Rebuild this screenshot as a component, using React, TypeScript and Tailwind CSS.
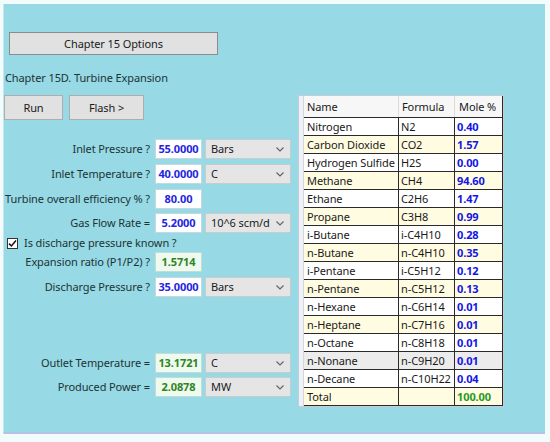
import { ReactNode } from 'react';

type Comp = { name: string; formula: string; mole: string };

const components: Comp[] = [
  { name: 'Nitrogen', formula: 'N2', mole: '0.40' },
  { name: 'Carbon Dioxide', formula: 'CO2', mole: '1.57' },
  { name: 'Hydrogen Sulfide', formula: 'H2S', mole: '0.00' },
  { name: 'Methane', formula: 'CH4', mole: '94.60' },
  { name: 'Ethane', formula: 'C2H6', mole: '1.47' },
  { name: 'Propane', formula: 'C3H8', mole: '0.99' },
  { name: 'i-Butane', formula: 'i-C4H10', mole: '0.28' },
  { name: 'n-Butane', formula: 'n-C4H10', mole: '0.35' },
  { name: 'i-Pentane', formula: 'i-C5H12', mole: '0.12' },
  { name: 'n-Pentane', formula: 'n-C5H12', mole: '0.13' },
  { name: 'n-Hexane', formula: 'n-C6H14', mole: '0.01' },
  { name: 'n-Heptane', formula: 'n-C7H16', mole: '0.01' },
  { name: 'n-Octane', formula: 'n-C8H18', mole: '0.01' },
  { name: 'n-Nonane', formula: 'n-C9H20', mole: '0.01' },
  { name: 'n-Decane', formula: 'n-C10H22', mole: '0.04' },
];

function Chevron() {
  return (
    <svg width="8" height="5" viewBox="0 0 8 5" className="shrink-0">
      <path d="M0.5 0.5 L4 4 L7.5 0.5" fill="none" stroke="#606060" strokeWidth="1.1" />
    </svg>
  );
}

function Select({ value }: { value: string }) {
  return (
    <div className="w-[86px] h-[20px] ml-[3px] flex items-center justify-between pl-[5px] pr-[6px] bg-[#e5e5e5] border border-[#c9cccc] text-[#1a1a1a] whitespace-nowrap">
      <span>{value}</span>
      <Chevron />
    </div>
  );
}

function ValueBox({ value, computed }: { value: string; computed?: boolean }) {
  return (
    <div
      className={
        computed
          ? 'w-[47px] h-[20px] flex items-center justify-center bg-[#eefaee] border border-[#c4dcd8] font-bold text-[#2f8424]'
          : 'w-[47px] h-[20px] flex items-center justify-center bg-white border border-[#c4d8de] font-bold text-[#2424e0]'
      }
    >
      {value}
    </div>
  );
}

function FormRow({ label, children, className }: { label: string; children: ReactNode; className?: string }) {
  return (
    <div className={'flex items-center h-[20px] ' + (className || '')}>
      <div className="w-[147px] flex justify-end whitespace-nowrap pr-[1px] text-[#1c3434]">{label}</div>
      <div className="ml-[4px] flex items-center">{children}</div>
    </div>
  );
}

function GridRow({ c, bg }: { c: Comp | null; bg: string }) {
  return (
    <div className={'flex h-[18px] border-b border-[#2a2a2a] ' + bg}>
      <div className="w-[95px] pl-[3px] flex items-center border-r border-[#2a2a2a] text-[#1a1a1a] whitespace-nowrap">
        {c ? c.name : 'Total'}
      </div>
      <div className="w-[56px] pl-[2px] flex items-center border-r border-[#2a2a2a] text-[#1a1a1a] whitespace-nowrap overflow-hidden">
        {c ? c.formula : ''}
      </div>
      <div className={'flex-1 pl-[2px] flex items-center font-bold ' + (c ? 'text-[#1414e6]' : 'text-[#1f9a1f]')}>
        {c ? c.mole : '100.00'}
      </div>
    </div>
  );
}

export default function App() {
  return (
    <div
      className="w-[550px] h-[442px] bg-[#f3fcfd] pt-[4px] pl-[3px] pr-[5px] text-[11px] leading-[16px] tracking-[-0.1px]"
      style={{ fontFamily: '"Noto Sans", "Open Sans", sans-serif' }}
    >
      <div className="h-[430px] bg-[#97d9e5] border-l border-[#c4e8ee] border-b-2 border-b-[#b9c2e3] flex flex-col">
        {/* Header */}
        <button className="ml-[5px] mt-[28px] w-[209px] h-[23px] bg-[#e1e1e1] border border-[#8c8c8c] text-[#1a1a1a]">
          Chapter 15 Options
        </button>
        <div className="ml-[1px] mt-[15px] text-[#1c3434]">Chapter 15D. Turbine Expansion</div>

        <div className="flex mt-[9px]">
          {/* Left form */}
          <div className="w-[288px] flex flex-col">
            <div className="flex h-[25px]">
              <button className="w-[59px] h-[25px] bg-[#e1e1e1] border border-[#adadad] text-[#1a1a1a]">Run</button>
              <button className="ml-[6px] w-[75px] h-[25px] bg-[#e1e1e1] border border-[#adadad] text-[#1a1a1a]">Flash &gt;</button>
            </div>

            <FormRow label="Inlet Pressure ?" className="mt-[19px]">
              <ValueBox value="55.0000" />
              <Select value="Bars" />
            </FormRow>
            <FormRow label="Inlet Temperature ?" className="mt-[5px]">
              <ValueBox value="40.0000" />
              <Select value="C" />
            </FormRow>
            <FormRow label="Turbine overall efficiency % ?" className="mt-[5px]">
              <ValueBox value="80.00" />
            </FormRow>
            <FormRow label="Gas Flow Rate =" className="mt-[4px]">
              <ValueBox value="5.2000" />
              <Select value="10^6 scm/d" />
            </FormRow>

            <div className="flex items-center h-[14px] mt-[3px] ml-[3px]">
              <div className="w-[11px] h-[11px] bg-white border border-[#333] flex items-center justify-center">
                <svg width="9" height="9" viewBox="0 0 9 9">
                  <path d="M1 4.6 L3.4 7 L8 1.6" fill="none" stroke="#111" strokeWidth="1.5" />
                </svg>
              </div>
              <span className="ml-[6px] text-[#1c3434] whitespace-nowrap">Is discharge pressure known ?</span>
            </div>

            <FormRow label="Expansion ratio (P1/P2) ?" className="mt-[2px]">
              <ValueBox value="1.5714" computed />
            </FormRow>
            <FormRow label="Discharge Pressure ?" className="mt-[5px]">
              <ValueBox value="35.0000" />
              <Select value="Bars" />
            </FormRow>

            <FormRow label="Outlet Temperature =" className="mt-[56px]">
              <ValueBox value="13.1721" computed />
              <Select value="C" />
            </FormRow>
            <FormRow label="Produced Power =" className="mt-[4px]">
              <ValueBox value="2.0878" computed />
              <Select value="MW" />
            </FormRow>
          </div>

          {/* Composition grid */}
          <div className="ml-[6px] w-[206px] flex border border-[#c6ccd2] bg-white self-start">
            <div className="w-[5px] bg-[#eef2f6] border-r border-[#d0d6dc]" />
            <div className="flex-1 flex flex-col border-r border-[#2a2a2a]">
              <div className="flex h-[22px] bg-[#f7f7f7] border-b border-[#2a2a2a] text-[#1a1a1a]">
                <div className="w-[95px] pl-[3px] flex items-center border-r border-[#dcdcdc]">Name</div>
                <div className="w-[56px] pl-[3px] flex items-center border-r border-[#dcdcdc]">Formula</div>
                <div className="flex-1 pl-[4px] flex items-center">Mole %</div>
              </div>
              {components.map((c, i) => (
                <GridRow
                  key={c.name}
                  c={c}
                  bg={c.name === 'n-Nonane' ? 'bg-[#ececec]' : i % 2 === 1 ? 'bg-[#fffce2]' : 'bg-white'}
                />
              ))}
              <GridRow c={null} bg="bg-[#fffce2]" />
            </div>
          </div>
        </div>
      </div>
    </div>
  );
}
